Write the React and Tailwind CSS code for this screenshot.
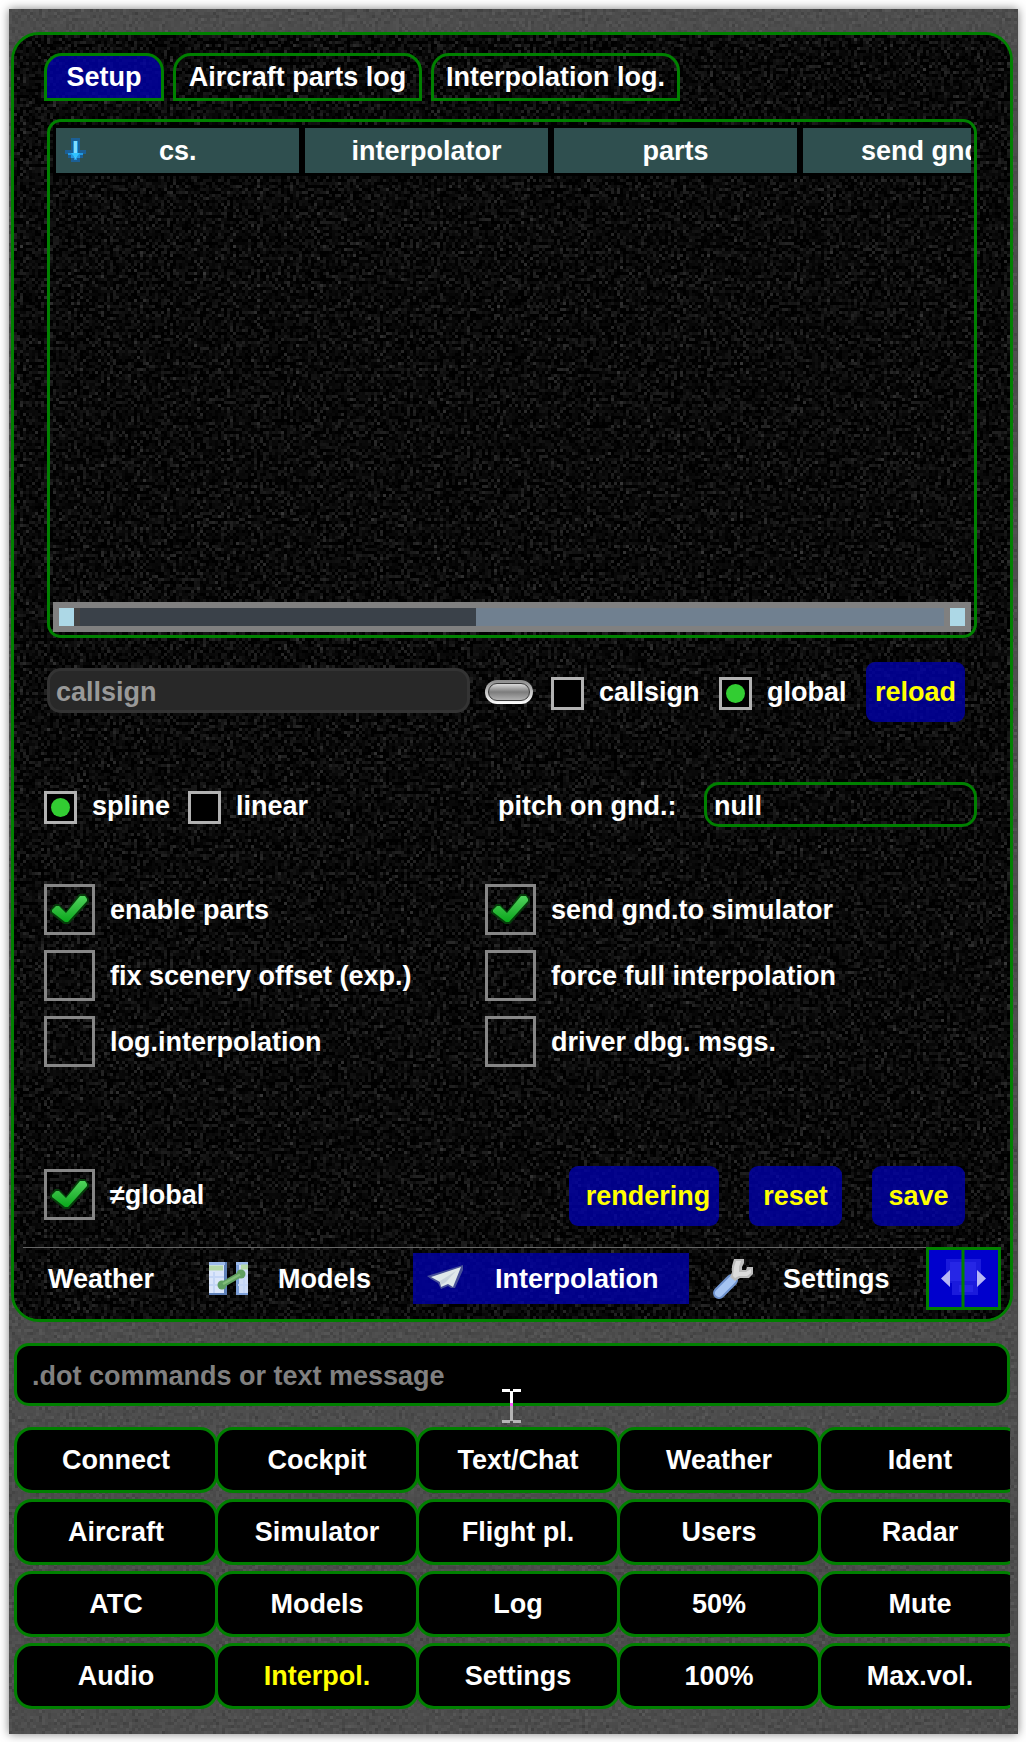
function Noise({ id, freq, slope, base, w, h }) {
  return (
    <svg className="pointer-events-none absolute inset-0 -z-10 h-full w-full" viewBox={`0 0 ${w} ${h}`} preserveAspectRatio="none">
      <filter id={id} filterUnits="userSpaceOnUse" x="0" y="0" width={w} height={h} colorInterpolationFilters="sRGB">
        <feTurbulence type="fractalNoise" baseFrequency={freq} numOctaves="2" seed="7" />
        <feColorMatrix values={`${slope} 0 0 0 ${base} ${slope} 0 0 0 ${base} ${slope} 0 0 0 ${base} 0 0 0 0 1`} result="grain" />
        <feFlood x="1" y="1" width="1" height="1" floodColor="#ffffff" result="dot" />
        <feOffset in="dot" x="0" y="0" width="3" height="3" result="cell" />
        <feTile in="cell" result="mask" />
        <feComposite in="grain" in2="mask" operator="in" />
        <feMorphology operator="dilate" radius="1" />
      </filter>
      <rect width={w} height={h} filter={`url(#${id})`} />
    </svg>
  );
}

function CheckMark() {
  return (
    <svg viewBox="0 0 45 45" className="h-[45px] w-[45px]">
      <defs>
        <linearGradient id="tick" x1="0" y1="0" x2="0" y2="1">
          <stop offset="0" stopColor="#4fd35c" />
          <stop offset="0.5" stopColor="#2fbb3d" />
          <stop offset="1" stopColor="#08a81a" />
        </linearGradient>
      </defs>
      <path d="M3 23L8 17H12L19 24L32 7H38L42 12V15L22 37H17L3 26Z" fill="#063c0b" />
      <path d="M5 23L9 19H12L19 26L33 9H38L40 12V14L21 35H18L5 25Z" fill="url(#tick)" />
    </svg>
  );
}

function Check({ label, on }) {
  return (
    <div className="flex h-[51px] items-center">
      <div className="mr-[15px] h-[51px] w-[51px] border-[3px] border-[#868686]">{on && <CheckMark />}</div>
      <span className="pt-[2px]">{label}</span>
    </div>
  );
}

function Radio({ label, on }) {
  return (
    <div className="flex h-[33px] items-center">
      <div className="mr-[15px] flex h-[33px] w-[33px] items-center justify-center border-[3px] border-[#b2b2b2] bg-black">
        {on && <div className="h-[19px] w-[19px] rounded-full bg-[#32cd32]" />}
      </div>
      <span className="-mt-[3px]">{label}</span>
    </div>
  );
}

function BlueButton({ label, className }) {
  return (
    <button className={`h-[60px] rounded-[9px] bg-[#0000aa]/80 pt-[1px] font-bold text-[#ffff00] ${className}`}>{label}</button>
  );
}

function SortArrow() {
  return (
    <svg viewBox="0 0 21 25" className="h-[25px] w-[21px]">
      <path d="M6 0h9v12h6v4h-3v4h-3v4H6v-4H3v-4H0v-4h6z" fill="#1b5f95" />
      <path d="M8 3h5v12h5v2h-3v3h-3v2H9v-2H6v-3H3v-2h5z" fill="#2197e0" />
      <path d="M9 3h3v15l-1.500 3L9 18z" fill="#7fdcff" />
      <path d="M6 15h9l-4.500 5z" fill="#2fc3ff" />
    </svg>
  );
}

function MapIcon() {
  return (
    <svg viewBox="0 0 39 36" className="h-[36px] w-[39px]">
      <rect y="2" width="18" height="33" fill="#5e80b8" />
      <rect x="0" y="2" width="15" height="31" fill="#dbe6fa" />
      <rect x="27" y="2" width="12" height="33" fill="#7c9fd8" />
      <rect x="30" y="4" width="9" height="29" fill="#cfddf6" />
      <path d="M0 3.500h16M27 3.500h12" stroke="#9dbbea" strokeWidth="3" />
      <path d="M0 8h14M32 7h7" stroke="#b5d9a8" strokeWidth="5" />
      <path d="M0 17h15M0 25h15M5 12v21M29 16h10M29 25h10M35 12v21" stroke="#c4d6f6" strokeWidth="2" />
      <path d="M13 25L32 14" stroke="#5f9f60" strokeWidth="6" strokeLinecap="round" />
      <circle cx="13" cy="25" r="4.500" fill="#5f9f60" />
      <circle cx="32" cy="14" r="4.500" fill="#5f9f60" />
      <path d="M14 24L31 14.500" stroke="#80bd78" strokeWidth="2.500" />
    </svg>
  );
}

function PlaneIcon() {
  return (
    <svg viewBox="0 0 38 26" className="h-[26px] w-[38px]">
      <path d="M0 11L36 0V5L28 23H24L21 21L14 24L11 18L4 14Z" fill="#47509a" />
      <path d="M4 12L34 2L26 22L21 19L14 22L13 17Z" fill="#dfe8ea" />
      <path d="M13 16L29 6L19 17L14 20Z" fill="#c8d3dc" />
    </svg>
  );
}

function WrenchIcon() {
  return (
    <svg viewBox="0 0 40 40" className="h-[40px] w-[40px]">
      <path d="M6 34L19 21" stroke="#6f93cf" strokeWidth="12" strokeLinecap="round" />
      <path d="M6 34L19 21" stroke="#a5c4f2" strokeWidth="8" strokeLinecap="round" />
      <path d="M19 7L21 0H31V4L29 8V11H33L34 8H40V15L36 19H27L22 22L17 18L19 13Z" fill="#bdbdbd" />
      <path d="M21 8L23 2H28L26 8V13H33L38 10V14L34 17H26L22 19L20 17Z" fill="#dcdcdc" />
    </svg>
  );
}

function Pill() {
  return (
    <div className="h-6 w-12 rounded-full bg-gradient-to-b from-[#8a8a8a] to-[#ffffff] p-[3px]">
      <div className="h-full w-full rounded-full border border-[#3c3c3c] bg-gradient-to-b from-[#dcdcdc] via-[#7c7c7c] to-[#b0b0b0]" />
    </div>
  );
}

const keys = [
  "Connect", "Cockpit", "Text/Chat", "Weather", "Ident",
  "Aircraft", "Simulator", "Flight pl.", "Users", "Radar",
  "ATC", "Models", "Log", "50%", "Mute",
  "Audio", "Interpol.", "Settings", "100%", "Max.vol.",
];

export default function App() {
  return (
    <div className="h-[1742px] w-[1026px] overflow-hidden bg-white pl-[9px] pt-[9px] font-['Liberation_Sans',Arial,sans-serif] text-[27px] leading-[31px] font-bold whitespace-nowrap text-white">
      <div className="relative isolate h-[1725px] w-[1009px] bg-[#4a4a4a] pl-[2px] pt-[23px] shadow-[0_0_9px_rgba(0,0,0,0.5)]">
        <Noise id="grey" freq="0.3" slope="0.16" base="0.22" w={1009} h={1725} />
        <main className="relative isolate h-[1290px] w-[1002px] overflow-hidden rounded-[28px] border-[3px] border-[#008000] bg-[#080808] pt-[18px]">
          <Noise id="dark" freq="0.3" slope="0.5" base="-0.218" w={996} h={1284} />
          <div className="ml-[30px] flex gap-[9px]">
            <div className="h-12 w-[120px] rounded-t-[18px] border-[3px] border-[#008000] bg-[#0000aa]/80 pt-[6px] text-center">Setup</div>
            <div className="h-12 w-[249px] rounded-t-[18px] border-[3px] border-[#008000] pt-[6px] text-center">Aircraft parts log</div>
            <div className="h-12 w-[249px] rounded-t-[18px] border-[3px] border-[#008000] pt-[6px] text-center">Interpolation log.</div>
          </div>

          <section className="mt-[18px] ml-[33px] flex h-[519px] w-[930px] flex-col justify-between rounded-[14px] border-[3px] border-[#008000] px-[3px] py-[3px]">
            <div className="flex h-[51px] w-[918px] gap-[6px] overflow-hidden bg-black py-[3px] pl-[3px]">
              <div className="flex w-[243px] shrink-0 items-center bg-[#2f4f4f] pl-[9px]">
                <SortArrow />
                <span className="ml-[73px] pt-[2px]">cs.</span>
              </div>
              <div className="w-[243px] shrink-0 bg-[#2f4f4f] pt-[8px] text-center">interpolator</div>
              <div className="w-[243px] shrink-0 bg-[#2f4f4f] pt-[8px] text-center">parts</div>
              <div className="w-[243px] shrink-0 bg-[#2f4f4f] pt-[8px] pl-[58px]">send gnd.</div>
            </div>
            <div className="flex h-[30px] w-[918px] bg-[#808080] p-[6px]">
              <div className="w-[15px] bg-[#add8e6]" />
              <div className="w-[6px] bg-[#444444]" />
              <div className="w-[396px] bg-[#3a4149]" />
              <div className="mr-[6px] w-[468px] bg-[#708090]" />
              <div className="w-[15px] bg-[#add8e6]" />
            </div>
          </section>

          <div className="mt-6 ml-[33px] flex h-[60px] items-center">
            <div className="-mt-[3px] h-[45px] w-[423px] rounded-[14px] border-[3px] border-[#333333] bg-[#282828] pt-[6px] pl-[6px] text-[#999999]">callsign</div>
            <div className="ml-[15px]"><Pill /></div>
            <div className="ml-[18px] w-[168px] pt-[3px]"><Radio label="callsign" /></div>
            <div className="w-[147px] pt-[3px]"><Radio label="global" on /></div>
            <BlueButton label="reload" className="w-[99px]" />
          </div>

          <div className="mt-[60px] ml-[30px] flex h-[45px] items-center">
            <div className="w-[144px] pt-[6px]"><Radio label="spline" on /></div>
            <div className="w-[310px] pt-[6px]"><Radio label="linear" /></div>
            <div className="w-[206px] pt-[3px]">pitch on gnd.:</div>
            <div className="h-[45px] w-[273px] rounded-[15px] border-[3px] border-[#008000] pt-[6px] pl-[7px]">null</div>
          </div>

          <div className="mt-[57px] ml-[30px] grid grid-cols-[441px_441px] gap-y-[15px]">
            <Check label="enable parts" on />
            <Check label="send gnd.to simulator" on />
            <Check label="fix scenery offset (exp.)" />
            <Check label="force full interpolation" />
            <Check label="log.interpolation" />
            <Check label="driver dbg. msgs." />
          </div>

          <div className="mt-[99px] ml-[30px] flex h-[60px] w-[921px] items-center">
            <div className="-mt-[3px] mr-auto"><Check label="≠global" on /></div>
            <BlueButton label="rendering" className="w-[150px] pl-[8px]" />
            <BlueButton label="reset" className="ml-[30px] w-[93px]" />
            <BlueButton label="save" className="ml-[30px] w-[93px]" />
          </div>

          <div className="mt-[21px] ml-[9px] flex h-[63px] w-[978px]">
            <nav className="flex h-[63px] w-[903px] border-t border-[#666666] pt-[5px]">
              <div className="w-[186px] pt-[11px] pl-[25px]">Weather</div>
              <div className="flex w-[204px] pt-[7px]">
                <MapIcon />
                <span className="ml-[30px] pt-[4px]">Models</span>
              </div>
              <div className="flex h-[51px] w-[276px] bg-[#0000aa]/80 pl-[14px]">
                <div className="pt-[12px]"><PlaneIcon /></div>
                <span className="ml-[30px] pt-[11px]">Interpolation</span>
              </div>
              <div className="flex pt-[6px] pl-[24px]">
                <WrenchIcon />
                <span className="ml-[30px] pt-[5px]">Settings</span>
              </div>
            </nav>
            <svg viewBox="0 0 75 63" className="h-[63px] w-[75px]">
              <rect width="75" height="63" fill="#0000cd" />
              <path d="M20 12h35v24H20zM26 36h26v12H26z" fill="#1a1adc" />
              <path d="M24 15h26v19H24zM33 38h14v7H33z" fill="#2626e6" />
              <path d="M24 23v17l-9-8.500zM51 23v17l9-8.500z" fill="#b6b6f6" />
              <path d="M1.500 1.500h72v60h-72zM37 0v63" fill="none" stroke="#008000" strokeWidth="3" />
            </svg>
          </div>
        </main>

        <div className="mt-[21px] ml-[3px] h-[63px] w-[996px] rounded-[15px] border-[3px] border-[#008000] bg-black pt-[15px] pl-[15px] text-[#808080]">
          .dot commands or text message
        </div>

        <div className="mt-[21px] ml-[3px] grid w-[996px] grid-cols-[repeat(5,201px)] gap-y-[6px] overflow-hidden">
          {keys.map((k) => (
            <div key={k} className={`h-[66px] w-[204px] rounded-[18px] border-[3px] border-[#008000] bg-black pt-[15px] text-center ${k === "Interpol." ? "text-[#ffff00]" : "text-white"}`}>
              {k}
            </div>
          ))}
        </div>

        <svg viewBox="0 0 19 34" className="absolute top-[1380px] left-[493px] h-[34px] w-[19px]">
          <path d="M0 0h8v2h3V0h8v3h-8v11H8V3H0z" fill="#ffffff" />
          <path d="M8 14h3v3H8z" fill="#ff55ff" />
          <path d="M8 17h3v14h8v3h-8v-2H8v2H0v-3h8z" fill="#b5b5b5" />
        </svg>
      </div>
    </div>
  );
}
